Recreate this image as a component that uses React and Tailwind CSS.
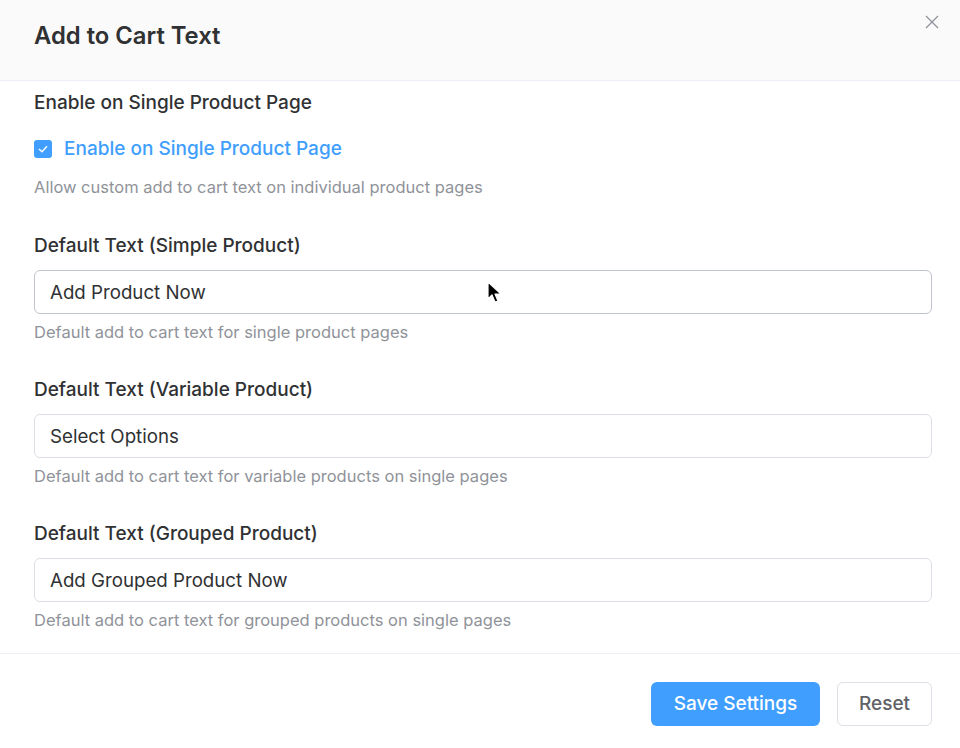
import React, { useState } from 'react';

const fields = [
  {
    label: 'Default Text (Simple Product)',
    value: 'Add Product Now',
    help: 'Default add to cart text for single product pages',
    hovered: true,
  },
  {
    label: 'Default Text (Variable Product)',
    value: 'Select Options',
    help: 'Default add to cart text for variable products on single pages',
  },
  {
    label: 'Default Text (Grouped Product)',
    value: 'Add Grouped Product Now',
    help: 'Default add to cart text for grouped products on single pages',
  },
];

const TextField = ({ field }) => {
  const [value, setValue] = useState(field.value);
  return (
    <div className="mt-[35px] first:mt-0">
      <label className="block text-[19px] leading-[26px] font-medium text-[#303133]">{field.label}</label>
      <div className="relative mt-[11px]">
        <input
          value={value}
          onChange={(e) => setValue(e.target.value)}
          className={`w-full h-[44px] rounded-[6px] border bg-white px-[15px] text-[18.7px] text-[#303133] outline-none ${
            field.hovered ? 'border-[#c0c4cc]' : 'border-[#dcdfe6]'
          }`}
        />
        {field.hovered && (
          <svg className="absolute left-[453px] top-[11px]" width="16" height="24" viewBox="0 0 16 24">
            <path d="M1 1 L1 18 L5 14 L8 21 L11 20 L8 13 L14 13 Z" fill="#000" stroke="#fff" strokeWidth="1.2" strokeLinejoin="round" />
          </svg>
        )}
      </div>
      <p className="mt-[8px] text-[16.5px] leading-[20px] text-[#909399]">{field.help}</p>
    </div>
  );
};

const App = () => {
  const [enabled, setEnabled] = useState(true);

  return (
    <div className="w-[960px] h-[748px] bg-white flex flex-col" style={{ fontFamily: 'Inter, "Noto Sans", sans-serif' }}>
      <div className="h-[81px] shrink-0 bg-[#fafafa] border-b border-[#ebeef5] flex items-start justify-between pl-[34px] pr-[20px]">
        <h2 className="mt-[21px] text-[23.8px] leading-[30px] font-semibold text-[#303133]">Add to Cart Text</h2>
        <button className="mt-[14px] text-[#909399]">
          <svg width="16" height="16" viewBox="0 0 16 16">
            <path d="M2 2 L14 14 M14 2 L2 14" stroke="currentColor" strokeWidth="1.3" />
          </svg>
        </button>
      </div>

      <div className="flex-1 pl-[34px] pr-[28px] pt-[10px]">
        <div className="text-[19px] leading-[24px] font-medium text-[#303133]">Enable on Single Product Page</div>
        <label className="mt-[22px] flex items-center gap-[12px] cursor-pointer">
          <span
            onClick={() => setEnabled(!enabled)}
            className={`w-[18px] h-[18px] rounded-[3px] flex items-center justify-center ${
              enabled ? 'bg-[#409eff]' : 'bg-white border border-[#dcdfe6]'
            }`}
          >
            {enabled && (
              <svg width="10" height="8" viewBox="0 0 10 8">
                <path d="M1 4 L4 6.8 L9 1.2" stroke="#fff" strokeWidth="1.4" fill="none" />
              </svg>
            )}
          </span>
          <span className={`text-[19px] leading-[24px] font-medium ${enabled ? 'text-[#409eff]' : 'text-[#606266]'}`}>
            Enable on Single Product Page
          </span>
        </label>
        <p className="mt-[16px] text-[16.5px] leading-[20px] text-[#909399]">Allow custom add to cart text on individual product pages</p>

        <div className="mt-[36px]">
          {fields.map((f) => (
            <TextField key={f.label} field={f} />
          ))}
        </div>
      </div>

      <div className="h-[95px] shrink-0 border-t border-[#ebeef5] flex items-start justify-end gap-[17px] px-[28px] pt-[28px]">
        <button className="h-[44px] w-[169px] rounded-[6px] bg-[#409eff] text-white text-[19px] font-medium">Save Settings</button>
        <button className="h-[44px] w-[95px] rounded-[6px] bg-white border border-[#dcdfe6] text-[#606266] text-[19px] font-medium">Reset</button>
      </div>
    </div>
  );
};

export default App;
